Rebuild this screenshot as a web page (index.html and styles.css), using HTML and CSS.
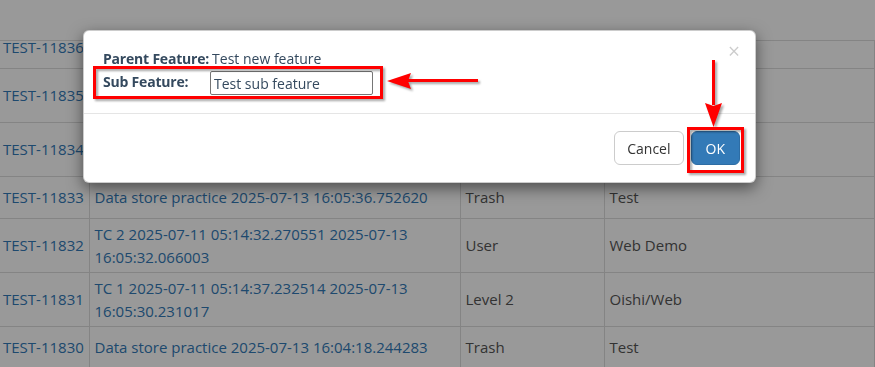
FILE: index.html
```html
<!DOCTYPE html>
<html lang="en">

<head>
    <meta charset="UTF-8">
    <meta name="viewport" content="width=device-width, initial-scale=1.0">
    <title>Test Cases</title>
    <link rel="stylesheet" href="styles.css">
</head>

<body>
    <div class="topbar"></div>

    <div class="table-wrap">
        <table class="cases">
            <colgroup>
                <col class="col-key">
                <col class="col-title">
                <col class="col-feature">
                <col class="col-project">
            </colgroup>
            <tbody>
                <tr>
                    <td><a href="#">TEST-11836</a></td>
                    <td><a href="#">Data store practice 2025-07-13 16:06:02.118204</a></td>
                    <td>Trash</td>
                    <td>Test</td>
                </tr>
                <tr>
                    <td><a href="#">TEST-11835</a></td>
                    <td><a href="#">TC 4 2025-07-11 05:15:02.481105 2025-07-13 16:05:44.509117</a></td>
                    <td>User</td>
                    <td>Web Demo</td>
                </tr>
                <tr>
                    <td><a href="#">TEST-11834</a></td>
                    <td><a href="#">TC 3 2025-07-11 05:14:58.103226 2025-07-13 16:05:40.887412</a></td>
                    <td>Level 2</td>
                    <td>Oishi/Web</td>
                </tr>
                <tr>
                    <td><a href="#">TEST-11833</a></td>
                    <td><a href="#">Data store practice 2025-07-13 16:05:36.752620</a></td>
                    <td>Trash</td>
                    <td>Test</td>
                </tr>
                <tr>
                    <td><a href="#">TEST-11832</a></td>
                    <td><a href="#">TC 2 2025-07-11 05:14:32.270551 2025-07-13 16:05:32.066003</a></td>
                    <td>User</td>
                    <td>Web Demo</td>
                </tr>
                <tr>
                    <td><a href="#">TEST-11831</a></td>
                    <td><a href="#">TC 1 2025-07-11 05:14:37.232514 2025-07-13 16:05:30.231017</a></td>
                    <td>Level 2</td>
                    <td>Oishi/Web</td>
                </tr>
                <tr>
                    <td><a href="#">TEST-11830</a></td>
                    <td><a href="#">Data store practice 2025-07-13 16:04:18.244283</a></td>
                    <td>Trash</td>
                    <td>Test</td>
                </tr>
            </tbody>
        </table>
    </div>

    <div class="backdrop"></div>

    <div class="modal">
        <button class="close" type="button">&times;</button>
        <div class="modal-body">
            <div class="field">
                <span class="label">Parent Feature:</span>
                <span class="value">Test new feature</span>
            </div>
            <div class="field">
                <label class="label sub-label" for="subFeature">Sub Feature:</label>
                <input type="text" id="subFeature" value="Test sub feature">
            </div>
        </div>
        <div class="modal-footer">
            <button class="btn" type="button">Cancel</button>
            <button class="btn btn-primary" type="button">OK</button>
        </div>
    </div>

    <!-- red callouts drawn over the screenshot -->
    <svg class="marks" width="875" height="367" viewBox="0 0 875 367">
        <rect x="94.5" y="67.5" width="287" height="30" fill="none" stroke="#f00" stroke-width="3" />
        <rect x="688.5" y="128.5" width="54" height="43" fill="none" stroke="#f00" stroke-width="3" />
        <rect x="406" y="79" width="72" height="3" fill="#f00" />
        <polygon points="387,81 411,73 408,81 411,89" fill="#f00" />
        <rect x="712" y="60" width="3" height="45" fill="#f00" />
        <polygon points="705,103 713.5,106 722,103 713.5,127" fill="#f00" />
    </svg>
</body>

</html>
```

FILE: styles.css
```css
* {
    margin: 0;
    padding: 0;
    box-sizing: border-box;
}

body {
    font-family: 'Open Sans', 'Liberation Sans', sans-serif;
    font-size: 14px;
    color: #34495e;
    background: #fff;
    height: 100vh;
    overflow: hidden;
}

.topbar {
    height: 41px;
    background: #fff;
    border-bottom: 1px solid #ddd;
    position: relative;
    z-index: 1;
}

.table-wrap {
    overflow: hidden;
}

.cases {
    width: 100%;
    margin-top: -15px;
    border-collapse: collapse;
    table-layout: fixed;
    font-size: 15px;
    line-height: 23px;
}

.col-key {
    width: 89px;
}

.col-title {
    width: 371px;
}

.col-feature {
    width: 144px;
}

.cases tr {
    height: 42px;
}

.cases td {
    padding: 3.5px 5px;
    border: 1px solid #ddd;
    vertical-align: middle;
    color: #555;
}

.cases td:first-child {
    padding: 3.5px 0 3.5px 3px;
    border-left: none;
    white-space: nowrap;
}

.cases a {
    color: #337ab7;
    text-decoration: none;
}

.backdrop {
    position: fixed;
    inset: 0;
    background: rgba(0, 0, 0, 0.4);
    z-index: 2;
}

.modal {
    position: absolute;
    left: 83px;
    top: 30px;
    width: 673px;
    background: #fff;
    border: 1px solid rgba(0, 0, 0, 0.2);
    border-radius: 6px;
    box-shadow: 0 5px 15px rgba(0, 0, 0, 0.5);
    z-index: 3;
}

.close {
    position: absolute;
    top: 10px;
    right: 15px;
    border: none;
    background: none;
    font-family: 'Open Sans', sans-serif;
    font-size: 21px;
    line-height: 1;
    color: #000;
    opacity: 0.2;
}

.modal-body {
    padding: 18px 20px 18px 19px;
    display: flex;
    flex-direction: column;
    gap: 2px;
}

.field {
    display: flex;
    align-items: center;
    line-height: 20px;
}

.label {
    font-weight: 700;
    letter-spacing: -0.2px;
    margin-right: 3px;
}

.sub-label {
    width: 107px;
    margin-right: 0;
    margin-top: -2px;
}

.field input {
    width: 163px;
    height: 24px;
    padding: 0 3px;
    border: 1px solid #767676;
    border-radius: 2px;
    font-family: 'Open Sans', sans-serif;
    font-size: 14px;
    color: #34495e;
}

.modal-footer {
    border-top: 1px solid #e5e5e5;
    padding: 17px 15px 17px;
    display: flex;
    justify-content: flex-end;
    gap: 7px;
}

.btn {
    height: 34px;
    padding: 0 12px;
    border: 1px solid #ccc;
    border-radius: 6px;
    background: #fff;
    font-family: 'Open Sans', sans-serif;
    font-size: 14px;
    color: #333;
}

.btn-primary {
    padding: 0 14px;
    background: #337ab7;
    border-color: #2e6da4;
    color: #fff;
}

.marks {
    position: absolute;
    left: 0;
    top: 0;
    z-index: 4;
    filter: drop-shadow(2px 2px 1px rgba(0, 0, 0, 0.35));
}
```
